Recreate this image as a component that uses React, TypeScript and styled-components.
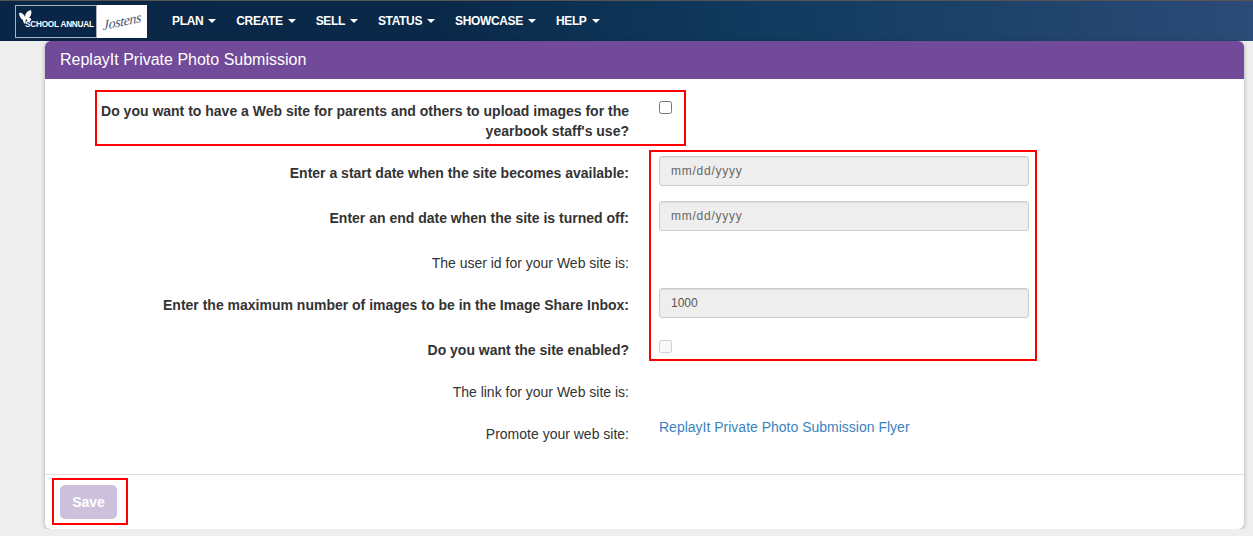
import styled, { createGlobalStyle } from 'styled-components';

const GlobalStyle = createGlobalStyle`
  html, body {
    margin: 0;
    padding: 0;
    background: #eeeeee;
    font-family: 'Liberation Sans', Arial, sans-serif;
    font-size: 14px;
    color: #333333;
  }
`;

const NAV_ITEMS = ['PLAN', 'CREATE', 'SELL', 'STATUS', 'SHOWCASE', 'HELP'];

function Logo() {
  return (
    <LogoWrapper>
      <SchoolAnnual>
        <svg width='14' height='15' viewBox='0 0 14 15'>
          <path
            d='M0 3 C2 2 5 4 6 7 C6 4 8 1 12 0 C13 3 12 6 10 8 C12 8 13 9 12 10 C11 12 9 12 8 10 L7 9 L6 14 C5 13 4 12 4 10 C2 9 0 6 0 3 Z'
            fill='#ffffff'
          />
        </svg>
        <SchoolText>SCHOOL ANNUAL</SchoolText>
      </SchoolAnnual>
      <JostensMark>Jostens</JostensMark>
    </LogoWrapper>
  );
}

function App() {
  return (
    <>
      <GlobalStyle />
      <Navbar>
        <Logo />
        <NavList>
          {NAV_ITEMS.map((item) => (
            <NavItem key={item}>
              {item}
              <Caret />
            </NavItem>
          ))}
        </NavList>
      </Navbar>

      <Card>
        <CardHeader>ReplayIt Private Photo Submission</CardHeader>
        <CardBody>
          <Highlight $left={50} $top={11} $width={591} $height={56} />
          <Highlight $left={604} $top={71} $width={388} $height={211} />

          <Row $height={72} $top={22}>
            <Label $bold>
              Do you want to have a Web site for parents and others to upload images for the yearbook staff's use?
            </Label>
            <Control>
              <Checkbox type='checkbox' />
            </Control>
          </Row>
          <Row $height={45}>
            <Label $bold $offset={7}>Enter a start date when the site becomes available:</Label>
            <Control>
              <TextInput $date disabled placeholder='mm/dd/yyyy' />
            </Control>
          </Row>
          <Row $height={45}>
            <Label $bold $offset={7}>Enter an end date when the site is turned off:</Label>
            <Control>
              <TextInput $date disabled placeholder='mm/dd/yyyy' />
            </Control>
          </Row>
          <Row $height={42}>
            <Label $offset={7}>The user id for your Web site is:</Label>
            <Control />
          </Row>
          <Row $height={45}>
            <Label $bold $offset={7}>Enter the maximum number of images to be in the Image Share Inbox:</Label>
            <Control>
              <TextInput disabled defaultValue='1000' />
            </Control>
          </Row>
          <Row $height={42}>
            <Label $bold $offset={7}>Do you want the site enabled?</Label>
            <Control>
              <DisabledCheckbox type='checkbox' disabled />
            </Control>
          </Row>
          <Row $height={42}>
            <Label $offset={7}>The link for your Web site is:</Label>
            <Control />
          </Row>
          <Row $height={42}>
            <Label $offset={7}>Promote your web site:</Label>
            <Control>
              <FlyerLink href='#'>ReplayIt Private Photo Submission Flyer</FlyerLink>
            </Control>
          </Row>
        </CardBody>
        <CardFooter>
          <SaveOutline>
            <SaveButton>Save</SaveButton>
          </SaveOutline>
        </CardFooter>
      </Card>
    </>
  );
}

export default App;

const Navbar = styled.nav`
  display: flex;
  align-items: center;
  height: 40px;
  padding-left: 15px;
  border-top: 1px solid #555555;
  background: linear-gradient(90deg, #0a2647 0%, #0a2949 35%, #103a5e 60%, #2c4b77 100%);
`;

const LogoWrapper = styled.div`
  display: flex;
  width: 132px;
  height: 33px;
  background: #ffffff;
`;

const SchoolAnnual = styled.div`
  position: relative;
  width: 82px;
  height: 33px;
  box-sizing: border-box;
  border: 1px solid #a9b4c0;
  background: #0a2647;

  svg {
    position: absolute;
    left: 3px;
    top: 4px;
  }
`;

const SchoolText = styled.span`
  position: absolute;
  left: 9px;
  top: 14px;
  font-size: 8.2px;
  font-weight: 700;
  letter-spacing: -0.2px;
  white-space: nowrap;
  color: #ffffff;
`;

const JostensMark = styled.span`
  flex: 1;
  text-align: center;
  font-family: 'Liberation Serif', serif;
  font-style: italic;
  font-size: 14px;
  letter-spacing: -0.3px;
  line-height: 33px;
  color: #4a5570;
  transform: rotate(-12deg) skewX(-12deg);
`;

const NavList = styled.div`
  display: flex;
  gap: 20px;
  margin-left: 25px;
`;

const NavItem = styled.div`
  display: flex;
  align-items: center;
  margin-top: -1px;
  font-size: 12px;
  letter-spacing: -0.35px;
  font-weight: 700;
  color: #ffffff;
`;

const Caret = styled.span`
  width: 0;
  height: 0;
  margin-left: 5px;
  border-top: 4px solid #ffffff;
  border-left: 4px solid transparent;
  border-right: 4px solid transparent;
`;

const Card = styled.div`
  width: 1199px;
  height: 488px;
  margin-left: 45px;
  display: flex;
  flex-direction: column;
  overflow: hidden;
  background: #ffffff;
  border-radius: 6px;
  box-shadow: 0 1px 4px rgba(0, 0, 0, 0.3);
`;

const CardHeader = styled.div`
  height: 38px;
  flex: none;
  padding-left: 15px;
  line-height: 37px;
  font-size: 16px;
  color: #ffffff;
  background: #714a9a;
`;

const CardBody = styled.div`
  position: relative;
  flex: 1;
`;

const Highlight = styled.div<{ $left: number; $top: number; $width: number; $height: number }>`
  position: absolute;
  left: ${(p) => p.$left}px;
  top: ${(p) => p.$top}px;
  width: ${(p) => p.$width}px;
  height: ${(p) => p.$height}px;
  box-sizing: border-box;
  border: 2px solid #ff0000;
  pointer-events: none;
`;

const Row = styled.div<{ $height: number; $top?: number }>`
  display: grid;
  grid-template-columns: 584px 1fr;
  column-gap: 30px;
  height: ${(p) => p.$height}px;
  padding-top: ${(p) => p.$top ?? 5}px;
  box-sizing: border-box;
`;

const Label = styled.label<{ $bold?: boolean; $offset?: number }>`
  padding-top: ${(p) => p.$offset ?? 0}px;
  padding-left: 55px;
  text-align: right;
  font-size: 14px;
  line-height: 20px;
  font-weight: ${(p) => (p.$bold ? 700 : 400)};
`;

const Control = styled.div`
  width: 370px;
`;

const Checkbox = styled.input`
  display: block;
  width: 13px;
  height: 13px;
  margin: 0;
`;

const DisabledCheckbox = styled(Checkbox)`
  margin-top: 7px;
`;

const TextInput = styled.input<{ $date?: boolean }>`
  display: block;
  width: 100%;
  height: 30px;
  box-sizing: border-box;
  padding: 0 11px;
  border: 1px solid #cccccc;
  border-radius: 3px;
  background: #eeeeee;
  font-family: inherit;
  font-size: 12px;
  letter-spacing: ${(p) => (p.$date ? '0.75px' : '0')};
  color: #555555;
  box-shadow: inset 0 1px 1px rgba(0, 0, 0, 0.075);

  &::placeholder {
    color: #666666;
    opacity: 1;
  }
`;

const FlyerLink = styled.a`
  display: block;
  font-size: 14px;
  line-height: 20px;
  color: #3b82bd;
  text-decoration: none;
`;

const CardFooter = styled.div`
  flex: none;
  height: 55px;
  padding: 3px 0 0 7px;
  box-sizing: border-box;
  border-top: 1px solid #dddddd;
`;

const SaveOutline = styled.div`
  width: 76px;
  height: 47px;
  box-sizing: border-box;
  padding: 5px 0 0 6px;
  border: 2px solid #ff0000;
`;

const SaveButton = styled.button`
  width: 57px;
  height: 34px;
  padding: 0;
  border: none;
  border-radius: 5px;
  background: #cdc0dc;
  font-family: inherit;
  font-size: 14px;
  font-weight: 700;
  color: #ffffff;
`;
